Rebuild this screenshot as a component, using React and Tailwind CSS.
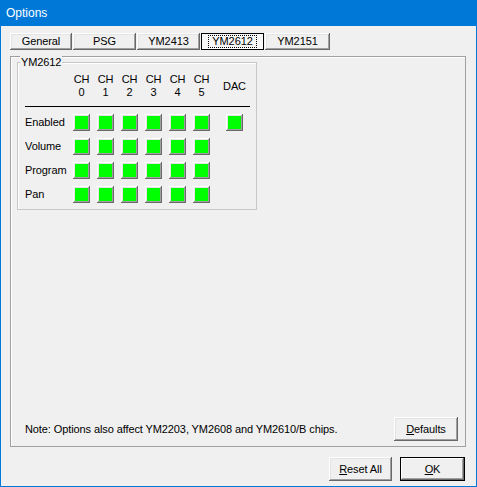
import React from "react";

const raised =
  "shadow-[inset_-1px_-1px_#696969,inset_1px_1px_#ffffff,inset_-2px_-2px_#a0a0a0,inset_2px_2px_#e3e3e3]";

function WinButton({ children, className = "", isDefault = false }) {
  return (
    <div
      className={
        "flex items-center justify-center bg-[#f0f0f0] text-[11px] leading-[13px] text-black " +
        (isDefault
          ? "shadow-[inset_0_0_0_1px_#000000,inset_-2px_-2px_#696969,inset_2px_2px_#ffffff,inset_-3px_-3px_#a0a0a0] "
          : raised + " ") +
        className
      }
    >
      {children}
    </div>
  );
}

function Tab({ label, width, active }) {
  if (active) {
    return (
      <div
        className={`${width} h-[17px] flex items-center justify-center bg-[#f7f7f7] shadow-[inset_0_0_0_1px_#000000,inset_-2px_-2px_#ffffff]`}
      >
        <span className="px-[3px] leading-[11px] border border-dotted border-black">{label}</span>
      </div>
    );
  }
  return (
    <WinButton className={`${width} h-[17px]`}>
      <span>{label}</span>
    </WinButton>
  );
}

function Box() {
  return <div className={`w-[17px] h-[17px] bg-[#00ff00] ${raised}`} />;
}

const channels = [0, 1, 2, 3, 4, 5];
const rows = [
  { name: "Enabled", dac: true },
  { name: "Volume", dac: false },
  { name: "Program", dac: false },
  { name: "Pan", dac: false },
];

function App() {
  return (
    <div
      className="w-[477px] h-[487px] flex flex-col bg-[#f0f0f0] border-x border-b border-[#0078d7] text-[11px] tracking-[-0.1px] text-black"
      style={{ fontFamily: '"Liberation Sans", Arial, sans-serif' }}
    >
      {/* title bar */}
      <div className="h-[26px] -mx-px bg-[#0078d7] flex items-center pl-[6px] text-white text-[12px] tracking-normal">
        Options
      </div>

      <div className="flex flex-col pl-[9px] pr-[10px] pt-[7px]">
        {/* tabs */}
        <div className="flex gap-px">
          <Tab label="General" width="w-[62px]" />
          <Tab label="PSG" width="w-[63px]" />
          <Tab label="YM2413" width="w-[63px]" />
          <Tab label="YM2612" width="w-[63px]" active />
          <Tab label="YM2151" width="w-[65px]" />
        </div>

        {/* tab page */}
        <div className="mt-[6px] h-[391px] w-[456px] flex flex-col border border-[#a0a0a0] shadow-[inset_1px_1px_#ffffff] pl-[6px] pt-[5px]">
          <div className="relative w-[240px] h-[148px] border border-[#c8c8c8] shadow-[inset_1px_1px_#ffffff] pl-[7px] pt-[10px]">
            <div className="absolute -top-[7px] left-[2px] px-px bg-[#f0f0f0] leading-[13px]">YM2612</div>

            {/* header */}
            <div className="flex gap-[7px] h-[26px]">
              <div className="w-[41px]" />
              {channels.map((c) => (
                <div key={c} className="w-[17px] flex flex-col items-center leading-[13px]">
                  <span>CH</span>
                  <span>{c}</span>
                </div>
              ))}
              <div className="w-[17px] ml-[9px] flex items-center justify-center whitespace-nowrap">DAC</div>
            </div>

            <div className="mt-[7px] w-[225px] h-px bg-black" />

            <div className="mt-[7px] flex flex-col gap-[7px]">
              {rows.map((r) => (
                <div key={r.name} className="flex items-center gap-[7px] h-[17px]">
                  <div className="w-[41px] whitespace-nowrap -mt-[1px]">{r.name}</div>
                  {channels.map((c) => (
                    <Box key={c} />
                  ))}
                  {r.dac && (
                    <div className="ml-[9px]">
                      <Box />
                    </div>
                  )}
                </div>
              ))}
            </div>
          </div>

          <div className="mt-auto mb-[5px] flex items-center pl-[8px] pr-[7px]">
            <span className="flex-1">Note: Options also affect YM2203, YM2608 and YM2610/B chips.</span>
            <WinButton className="w-[64px] h-[24px]">
              <span>
                <span className="underline">D</span>efaults
              </span>
            </WinButton>
          </div>
        </div>

        {/* bottom buttons */}
        <div className="mt-[10px] flex justify-end gap-[8px] pr-px">
          <WinButton className="w-[63px] h-[24px]">
            <span>
              <span className="underline">R</span>eset All
            </span>
          </WinButton>
          <WinButton className="w-[65px] h-[24px]" isDefault>
            <span>
              <span className="underline">O</span>K
            </span>
          </WinButton>
        </div>
      </div>
    </div>
  );
}

export default App;
